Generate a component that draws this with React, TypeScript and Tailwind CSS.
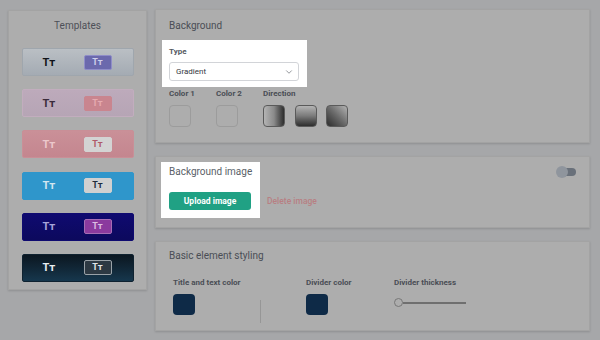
import { ChevronDown } from "lucide-react";

type Template = {
  bg: string;
  text: string;
  btn: string;
  btnText: string;
};

const templates: Template[] = [
  {
    bg: "bg-gradient-to-b from-[#babfc4] to-[#a4abb3] border-[#9fa6ad]",
    text: "text-[#111318]",
    btn: "bg-[#6b69ad] border-[#8f8dc8]",
    btnText: "text-[#cfcfec]",
  },
  {
    bg: "bg-gradient-to-b from-[#bdaabb] to-[#b6a5b5] border-[#c2adbe]",
    text: "text-[#3a2b3a]",
    btn: "bg-[#c9858f] border-[#c9858f]",
    btnText: "text-[#e6aab1]",
  },
  {
    bg: "bg-gradient-to-b from-[#ca9098] to-[#c4868f] border-[#c98f97]",
    text: "text-[#ecc8cc]",
    btn: "bg-[#d3d3d3] border-[#d3d3d3]",
    btnText: "text-[#b05a68]",
  },
  {
    bg: "bg-[#2f96cb] border-[#2f96cb]",
    text: "text-[#d3e6f0]",
    btn: "bg-[#d0d0d0] border-[#d0d0d0]",
    btnText: "text-[#1e2d3c]",
  },
  {
    bg: "bg-gradient-to-b from-[#0f0a70] to-[#0c095d] border-[#0f0a70]",
    text: "text-[#a6a4da]",
    btn: "bg-[#8b3a9e] border-[#a66db4]",
    btnText: "text-[#dcbde3]",
  },
  {
    bg: "bg-gradient-to-b from-[#0b1721] to-[#16374d] border-[#0f2230]",
    text: "text-[#e8eef2]",
    btn: "bg-[#2d3943] border-[#9aa2a8]",
    btnText: "text-[#e2e6ea]",
  },
];

const Tt = ({ className }: { className: string }) => (
  <span className={`font-bold leading-none [font-variant:small-caps] ${className}`}>Tt</span>
);

export default function App() {
  return (
    <div className="w-[600px] h-[340px] bg-[#a6a7a9] flex items-start gap-[8px] pl-[8px] pt-[10px] font-['Roboto',sans-serif] overflow-hidden">
      {/* Templates */}
      <div className="w-[139px] h-[280px] bg-[#adadad] border border-[#a3a3a3] shadow-[0_1px_2px_rgba(0,0,0,0.15)] flex flex-col items-center">
        <div className="pt-[9px] text-[10px] leading-[12px] text-[#4d5058]">Templates</div>
        <div className="mt-[16px] flex flex-col gap-[13.2px]">
          {templates.map((t, i) => (
            <div
              key={i}
              className={`w-[112px] h-[28px] rounded-[2px] border flex items-center pl-[20px] pr-[21px] ${t.bg}`}
            >
              <Tt className={`text-[11px] ${t.text}`} />
              <div
                className={`ml-auto w-[28px] h-[15px] rounded-[2px] border flex items-center justify-center ${t.btn}`}
              >
                <Tt className={`text-[9px] ${t.btnText}`} />
              </div>
            </div>
          ))}
        </div>
      </div>

      {/* Right column */}
      <div className="w-[435px] flex flex-col gap-[13px] -mt-[1px]">
        {/* Background */}
        <div className="h-[134px] bg-[#adadad] border border-[#a3a3a3] shadow-[0_1px_2px_rgba(0,0,0,0.15)] px-[13px] pt-[9px]">
          <div className="text-[10px] leading-[14px] text-[#4a4d55]">Background</div>
          <div className="mt-[7px] -ml-[7px] w-[145px] bg-white px-[7px] pt-[7px] pb-[6px]">
            <div className="text-[8px] leading-[10px] font-bold text-[#555a62]">Type</div>
            <div className="mt-[5px] w-[130px] h-[19px] border border-[#d2d4d8] rounded-[3px] flex items-center pl-[6px] pr-[4px]">
              <span className="text-[8px] text-[#333841]">Gradient</span>
              <ChevronDown className="ml-auto text-[#555a62]" size={10} strokeWidth={1.5} />
            </div>
          </div>
          <div className="mt-[2px] flex">
            <div className="w-[47px]">
              <div className="text-[8px] leading-[10px] font-bold text-[#4a4d55]">Color 1</div>
              <div className="mt-[6px] w-[22px] h-[22px] rounded-[4px] border border-[#9c9c9c]" />
            </div>
            <div className="w-[47px]">
              <div className="text-[8px] leading-[10px] font-bold text-[#4a4d55]">Color 2</div>
              <div className="mt-[6px] w-[22px] h-[22px] rounded-[4px] border border-[#9c9c9c]" />
            </div>
            <div>
              <div className="text-[8px] leading-[10px] font-bold text-[#4a4d55]">Direction</div>
              <div className="mt-[6px] flex gap-[9.5px]">
                <div className="w-[22px] h-[22px] rounded-[4px] border border-[#5a5a5a] bg-gradient-to-r from-[#b4b4b4] via-[#8a8a8a] to-[#2e2e2e]" />
                <div className="w-[22px] h-[22px] rounded-[4px] border border-[#5a5a5a] bg-gradient-to-b from-[#b4b4b4] via-[#7a7a7a] to-[#2e2e2e]" />
                <div className="w-[22px] h-[22px] rounded-[4px] border border-[#5a5a5a] bg-gradient-to-tr from-[#2e2e2e] via-[#6a6a6a] to-[#b4b4b4]" />
              </div>
            </div>
          </div>
        </div>

        {/* Background image */}
        <div className="h-[72px] bg-[#adadad] border border-[#a3a3a3] shadow-[0_1px_2px_rgba(0,0,0,0.15)] flex items-start pl-[5px] pr-[13px] pt-[5px]">
          <div className="w-[99px] h-[56px] bg-white px-[8px] pt-[3px]">
            <div className="text-[10px] leading-[14px] whitespace-nowrap text-[#5a5f68]">Background image</div>
            <button className="mt-[13px] w-[82px] h-[18px] rounded-[3px] bg-[#20a184] text-white text-[8.5px] font-bold flex items-center justify-center">
              Upload image
            </button>
          </div>
          <span className="ml-[7px] mt-[33px] text-[8.5px] leading-[12px] font-medium text-[#b87f83]">Delete image</span>
          <div className="ml-auto mt-[4px] relative w-[20px] h-[12px]">
            <div className="absolute right-0 top-[2px] w-[16px] h-[8px] rounded-full bg-[#69707a]" />
            <div className="absolute left-0 top-0 w-[12px] h-[12px] rounded-full bg-[#8f959d]" />
          </div>
        </div>

        {/* Basic element styling */}
        <div className="h-[90px] bg-[#adadad] border border-[#a3a3a3] shadow-[0_1px_2px_rgba(0,0,0,0.15)] px-[13px] pt-[7px]">
          <div className="text-[10px] leading-[14px] text-[#4a4d55]">Basic element styling</div>
          <div className="mt-[15px] ml-[4px] flex items-start">
            <div className="w-[87px]">
              <div className="text-[8px] leading-[10px] font-bold text-[#4a4d55]">Title and text color</div>
              <div className="mt-[6px] w-[22px] h-[21px] rounded-[4px] bg-[#0e2a47]" />
            </div>
            <div className="mt-[22px] w-px h-[23px] bg-[#969696]" />
            <div className="ml-[45px] w-[88px]">
              <div className="text-[8px] leading-[10px] font-bold text-[#4a4d55]">Divider color</div>
              <div className="mt-[6px] w-[22px] h-[21px] rounded-[4px] bg-[#0e2a47]" />
            </div>
            <div>
              <div className="text-[8px] leading-[10px] font-bold text-[#4a4d55]">Divider thickness</div>
              <div className="mt-[10px] flex items-center">
                <div className="w-[9px] h-[9px] rounded-full border-[1.5px] border-[#777]" />
                <div className="w-[63px] h-[2px] bg-[#6f6f6f]" />
              </div>
            </div>
          </div>
        </div>
      </div>
    </div>
  );
}
